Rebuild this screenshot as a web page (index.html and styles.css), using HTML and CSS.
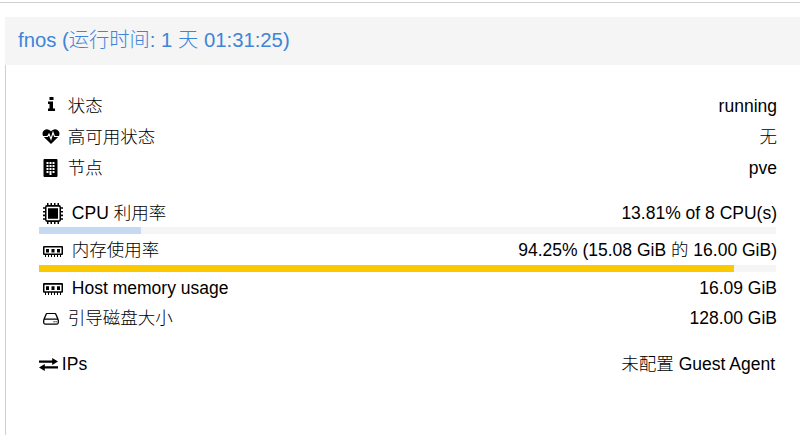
FILE: index.html
```html
<!DOCTYPE html>
<html lang="zh-CN">
<head>
  <meta charset="UTF-8">
  <title>fnos</title>
  <link rel="stylesheet" href="styles.css">
</head>
<body>
  <div class="page">
    <div class="panel">
      <div class="panel-title">fnos (运行时间: 1 天 01:31:25)</div>
      <div class="panel-body">
        <div class="group">
          <div class="row">
            <span class="label label-status">
              <svg class="icon icon-info" viewBox="0 0 7 14"><path d="M1.500 0h4v3h-4zM0 4.500h5v7h2V14H0v-2.500h1.500V7H0z"/></svg>
              状态
            </span>
            <span>running</span>
          </div>
          <div class="row">
            <span class="label label-status">
              <svg class="icon icon-heart" viewBox="0 0 18 15"><path d="M9 15 1.600 7.800C-.8 5 .9.300 4.800.300 6.500.300 8 1.200 9 2.600 10 1.200 11.500.300 13.200.300c3.900 0 5.600 4.700 3.200 7.500z"/><path fill="none" stroke="#fff" stroke-width="1.100" d="M0 7.500h5.500l1.500-2.500 2 5 2-6.500 1.500 4H18"/></svg>
              高可用状态
            </span>
            <span>无</span>
          </div>
          <div class="row">
            <span class="label label-status">
              <svg class="icon icon-node" viewBox="0 0 14 18"><path fill-rule="evenodd" d="M1 0h12a1 1 0 0 1 1 1v16a1 1 0 0 1-1 1H1a1 1 0 0 1-1-1V1a1 1 0 0 1 1-1zM3 3v2h2V3zm3 0v2h2V3zm3 0v2h2V3zM3 6v2h2V6zm3 0v2h2V6zm3 0v2h2V6zM3 9v2h2V9zm3 0v2h2V9zm3 0v2h2V9zM3 12v2h2v-2zm3 0v4h2v-4zm3 0v2h2v-2z"/></svg>
              节点
            </span>
            <span>pve</span>
          </div>
        </div>

        <div class="group group-usage">
          <div class="row row-cpu">
            <span class="label">
              <svg class="icon icon-cpu" viewBox="0 0 20 20" preserveAspectRatio="none"><path fill-rule="evenodd" d="M4 2h12a2 2 0 0 1 2 2v12a2 2 0 0 1-2 2H4a2 2 0 0 1-2-2V4a2 2 0 0 1 2-2zm0 1.500a.5.5 0 0 0-.5.5v12a.5.5 0 0 0 .5.5h12a.5.5 0 0 0 .5-.5V4a.5.5 0 0 0-.5-.5zM5 5h10v10H5zM4 0h1.500v2H4zm3.500 0H9v2H7.500zM11 0h1.500v2H11zm3.500 0H16v2h-1.500zM4 18h1.500v2H4zm3.500 0H9v2H7.500zM11 18h1.500v2H11zm3.500 0H16v2h-1.500zM0 4h2v1.500H0zm0 3.500h2V9H0zM0 11h2v1.500H0zm0 3.500h2V16H0zM18 4h2v1.500h-2zm0 3.500h2V9h-2zm0 3.500h2v1.500h-2zm0 3.500h2V16h-2z"/></svg>
              CPU 利用率
            </span>
            <span>13.81% of 8 CPU(s)</span>
          </div>
          <div class="bar"><div class="bar-fill bar-cpu" style="width: 13.81%"></div></div>
          <div class="row row-mem">
            <span class="label">
              <svg class="icon icon-ram" viewBox="0 1 20 11" preserveAspectRatio="none"><path fill-rule="evenodd" d="M1 1h18a1 1 0 0 1 1 1v7a1 1 0 0 1-1 1H1a1 1 0 0 1-1-1V2a1 1 0 0 1 1-1zm.5 1.500v6h17v-6zM3 4h3v3.500H3zm5.500 0h3v3.500h-3zM14 4h3v3.500h-3zM2 10h1v2H2zm3 0h1v2H5zm3 0h1v2H8zm3 0h1v2h-1zm3 0h1v2h-1zm3 0h1v2h-1z"/></svg>
              内存使用率
            </span>
            <span>94.25% (15.08 GiB 的 16.00 GiB)</span>
          </div>
          <div class="bar"><div class="bar-fill bar-mem" style="width: 94.25%"></div></div>
          <div class="row row-host">
            <span class="label">
              <svg class="icon icon-ram icon-host" viewBox="0 1 20 11" preserveAspectRatio="none"><path fill-rule="evenodd" d="M1 1h18a1 1 0 0 1 1 1v7a1 1 0 0 1-1 1H1a1 1 0 0 1-1-1V2a1 1 0 0 1 1-1zm.5 1.500v6h17v-6zM3 4h3v3.500H3zm5.500 0h3v3.500h-3zM14 4h3v3.500h-3zM2 10h1v2H2zm3 0h1v2H5zm3 0h1v2H8zm3 0h1v2h-1zm3 0h1v2h-1zm3 0h1v2h-1z"/></svg>
              Host memory usage
            </span>
            <span>16.09 GiB</span>
          </div>
          <div class="row row-disk">
            <span class="label">
              <svg class="icon icon-disk" viewBox="0 1 16 12.500" preserveAspectRatio="none"><path fill="none" stroke="#000" stroke-width="1.300" d="M.7 8.500V11a1.500 1.500 0 0 0 1.500 1.500h11.600a1.500 1.500 0 0 0 1.500-1.500V8.500a1 1 0 0 0-1-1H1.700a1 1 0 0 0-1 1zM.9 7.800 3 2.500a1.500 1.500 0 0 1 1.400-1h7.200a1.500 1.500 0 0 1 1.400 1l2.100 5.300"/><path d="M10.500 9.500h1.200v1.200h-1.200zm2 0h1.200v1.200h-1.200z"/></svg>
              引导磁盘大小
            </span>
            <span>128.00 GiB</span>
          </div>
        </div>

        <div class="row row-ips">
          <span class="label label-ips">
            <svg class="icon icon-swap" viewBox="0 0 18 14" preserveAspectRatio="none"><path d="M12.500 0 18 3.800 12.500 7.500V5H0V2.600h12.500zM5.500 6.500V9H18v2.400H5.500V14L0 10.200z"/></svg>
            IPs
          </span>
          <span>未配置 Guest Agent</span>
        </div>
      </div>
    </div>
  </div>
</body>
</html>
```
FILE: styles.css
```css
html, body { margin: 0; height: 100%; overflow: hidden; background: #fff; }
body { font-family: "Liberation Sans", "Noto Sans CJK SC", sans-serif; font-size: 17.5px; font-weight: 300; color: #000; }
.page { border-top: 1px solid #d0d0d0; margin-top: 2px; padding: 14px 0 0 5px; height: 100%; box-sizing: border-box; }
.panel-title { height: 48px; line-height: 46px; padding-left: 13px; background: #f5f5f5; color: #3d85d8; font-size: 20.3px; }
.panel-body { border-left: 1px solid #cfcfcf; height: 370px; box-sizing: border-box; padding: 26px 24px 0 33px; }
.row { display: flex; justify-content: space-between; height: 31px; line-height: 31px; margin-right: -1px; }
.label { padding-left: 4px; }
.label-status { padding-left: 3px; }
.label-ips { padding-left: 0; }
.group-usage { margin-top: 14px; }
.row-cpu { height: 29px; line-height: 31px; }
.row-mem { line-height: 33px; }
.row-host { height: 32px; line-height: 32px; }
.row-disk { height: 29px; line-height: 29px; }
.row-ips { margin-top: 16px; margin-right: 1px; }
.icon { display: inline-block; margin-right: 4px; }
.icon-info { width: 7px; height: 14px; margin: 0 8px 0 6px; vertical-align: 1px; }
.icon-heart { width: 18px; height: 15px; margin-right: 3px; vertical-align: -.5px; }
.icon-node { width: 15px; height: 18px; margin: 0 5px 0 1px; vertical-align: -2.500px; }
.icon-cpu { width: 20px; height: 21px; vertical-align: -4.500px; }
.icon-ram { width: 20px; height: 11px; vertical-align: -.5px; }
.icon-host { height: 12px; vertical-align: -1px; }
.icon-disk { width: 16px; height: 12px; vertical-align: -.5px; }
.icon-swap { width: 19px; height: 13px; margin-right: -1px; vertical-align: -.5px; }
.bar { height: 7px; background: #f5f5f5; }
.bar-fill { height: 100%; }
.bar-cpu { background: #c5daf2; }
.bar-mem { background: #fbc900; }
```
